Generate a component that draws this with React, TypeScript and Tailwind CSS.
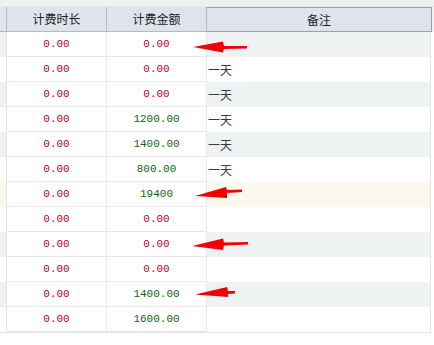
import React from "react";

type Row = { dur: string; fee: string; green?: boolean; note?: string; bg: string };

const rows: Row[] = [
  { dur: "0.00", fee: "0.00", bg: "bg-[#eff2f3]" },
  { dur: "0.00", fee: "0.00", note: "一天", bg: "bg-white" },
  { dur: "0.00", fee: "0.00", note: "一天", bg: "bg-[#eff2f3]" },
  { dur: "0.00", fee: "1200.00", green: true, note: "一天", bg: "bg-white" },
  { dur: "0.00", fee: "1400.00", green: true, note: "一天", bg: "bg-[#eff2f3]" },
  { dur: "0.00", fee: "800.00", green: true, note: "一天", bg: "bg-white" },
  { dur: "0.00", fee: "19400", green: true, bg: "bg-[#fdf8ee]" },
  { dur: "0.00", fee: "0.00", bg: "bg-white" },
  { dur: "0.00", fee: "0.00", bg: "bg-[#eff2f3]" },
  { dur: "0.00", fee: "0.00", bg: "bg-white" },
  { dur: "0.00", fee: "1400.00", green: true, bg: "bg-[#eff2f3]" },
  { dur: "0.00", fee: "1600.00", green: true, bg: "bg-white" },
];

const num = "font-['Liberation_Mono',monospace] text-[11px]";

export default function App() {
  return (
    <div className="relative w-[434px] h-[345px] overflow-hidden bg-white font-['Noto_Sans_CJK_SC',sans-serif] text-[12px]">
      <div className="h-[7px] bg-[#eef0f1] border-b border-[#e2e5e8]" />

      {/* header */}
      <div className="flex h-[25px] bg-[#dfe3ec] text-[#222]">
        <div className="w-[7px] border-r border-b border-[#b4bac4] bg-[#e3e6ec]" />
        <div className="w-[100px] flex items-center justify-center border-r border-b border-[#b4bac4]">计费时长</div>
        <div className="w-[100px] flex items-center justify-center border-r border-b border-[#b4bac4]">计费金额</div>
        <div className="w-[225px] flex items-center justify-center border-r border-b border-t border-[#9aa1ad]">备注</div>
        <div className="flex-1 bg-[#eef0f1]" />
      </div>

      {/* rows */}
      {rows.map((r, i) => (
        <div key={i} className={`flex h-[25px] ${r.bg}`}>
          <div className="w-[7px] border-r border-[#e4e4e4]" />
          <div className={`w-[100px] flex items-center justify-center bg-white border-r border-b border-[#e8e8e8] text-[#b8001f] ${num}`}>
            {r.dur}
          </div>
          <div
            className={`w-[100px] flex items-center justify-center bg-white border-r border-b border-[#e8e8e8] ${num} ${
              r.green ? "text-[#0f650f]" : "text-[#b8001f]"
            }`}
          >
            {r.fee}
          </div>
          <div className="w-[224px] flex items-center pl-[1px] border-r border-[#e6e6e6] text-[#3a3a3a]">{r.note}</div>
          <div className="flex-1 bg-white" />
        </div>
      ))}
      <div className="h-px w-[431px] bg-[#e4e4e4]" />

      {/* red annotation arrows */}
      <svg className="absolute inset-0 pointer-events-none" width="434" height="345" viewBox="0 0 434 345">
        <g fill="#f00000">
          <path d="M193 47 L223 41.5 L224 46 L247 46 L247 48.5 L224 49 L223 52.5 Z" />
          <path d="M195 196 L226 187 L227 190 L242 189.5 L242 192 L227 193 L227 198 Z" />
          <path d="M192 246 L223 238.5 L224 242.5 L248 242 L248 244.5 L224 245.5 L223 250 Z" />
          <path d="M195 294.5 L227 287 L228 291 L235 291 L235 293.5 L228 294 L228 297 Z" />
        </g>
      </svg>
    </div>
  );
}
